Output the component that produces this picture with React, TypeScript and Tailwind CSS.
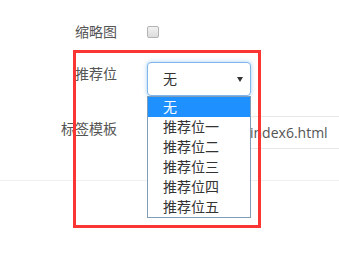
export default function App() {
  const options = ["无", "推荐位一", "推荐位二", "推荐位三", "推荐位四", "推荐位五"];

  return (
    <div className="relative h-[253px] w-[339px] overflow-hidden bg-white font-['Open_Sans','Noto_Sans_CJK_SC',sans-serif] text-[14px] leading-[20px] text-[#555]">
      <div className="mt-[22px] flex h-[20px] items-center">
        <div className="w-[117px] shrink-0 text-right">缩略图</div>
        <div className="ml-[30px] h-[12px] w-[12px] rounded-[2px] border border-[#b3b3b3] bg-gradient-to-b from-[#f2f2f2] to-[#dcdcdc]" />
      </div>

      <div className="mt-[20px] flex items-start">
        <div className="w-[117px] shrink-0 pt-[2px] text-right">推荐位</div>
        <div className="ml-[30px] flex h-[34px] w-[104px] items-center justify-between rounded-[4px] border border-[#7fb6ec] bg-white pl-[15px] pr-[7px] text-[#333] shadow-[0_0_4px_rgba(102,175,233,0.6)]">
          <span>无</span>
          <svg width="6" height="5" viewBox="0 0 6 5">
            <path d="M0 0h6L3 5z" fill="#333" />
          </svg>
        </div>
      </div>

      <div className="mt-[20px] flex items-start">
        <div className="w-[117px] shrink-0 pt-[3px] text-right">标签模板</div>
        <div className="ml-[30px] flex h-[33px] w-[220px] shrink-0 items-center border border-[#e8e8e8] pl-[102px] text-[#555]">
          index6.html
        </div>
      </div>

      <div className="mt-[31px] h-px bg-[#efefef]" />

      <div className="absolute left-[147px] top-[96px] w-[104px] border border-[#7f9db9] bg-white text-[#333]">
        {options.map((o, i) => (
          <div
            key={o}
            className={i === 0 ? "h-[20px] bg-[#1e90ff] pl-[15px] text-white" : "h-[20px] pl-[15px]"}
          >
            {o}
          </div>
        ))}
      </div>

      <div className="absolute left-[73px] top-[50px] h-[178px] w-[188px] border-[3px] border-[#fb3434]" />
    </div>
  );
}
